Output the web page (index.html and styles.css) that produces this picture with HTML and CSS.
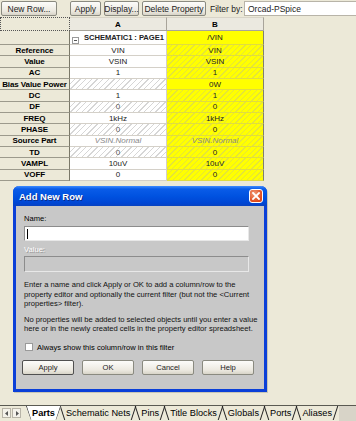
FILE: index.html
```html
<!DOCTYPE html>
<html>
<head>
<meta charset="utf-8">
<link rel="stylesheet" href="styles.css">
</head>
<body>
<div class="app">
  <div class="toolbar">
    <button class="btn btn-new">New Row...</button>
    <button class="btn btn-apply">Apply</button>
    <button class="btn btn-display">Display...</button>
    <button class="btn btn-delete">Delete Property</button>
    <span class="filter-label">Filter by:</span>
    <div class="filter-input">Orcad-PSpice</div>
  </div>

  <div class="sheet">
    <div class="grid">
      <div class="corner"></div>
      <div class="colhead">A</div>
      <div class="colhead">B</div>

      <div class="rowhead group-head"></div>
      <div class="cell a group"><span class="minus"></span><b>SCHEMATIC1 : PAGE1</b></div>
      <div class="cell b solid">/VIN</div>

      <div class="rowhead">Reference</div>
      <div class="cell a">VIN</div>
      <div class="cell b">VIN</div>

      <div class="rowhead">Value</div>
      <div class="cell a">VSIN</div>
      <div class="cell b">VSIN</div>

      <div class="rowhead">AC</div>
      <div class="cell a">1</div>
      <div class="cell b">1</div>

      <div class="rowhead">Bias Value Power</div>
      <div class="cell a hatch"></div>
      <div class="cell b solid">0W</div>

      <div class="rowhead">DC</div>
      <div class="cell a">1</div>
      <div class="cell b">1</div>

      <div class="rowhead">DF</div>
      <div class="cell a hatch">0</div>
      <div class="cell b">0</div>

      <div class="rowhead">FREQ</div>
      <div class="cell a">1kHz</div>
      <div class="cell b">1kHz</div>

      <div class="rowhead">PHASE</div>
      <div class="cell a hatch">0</div>
      <div class="cell b">0</div>

      <div class="rowhead">Source Part</div>
      <div class="cell a ital">VSIN.Normal</div>
      <div class="cell b ital">VSIN.Normal</div>

      <div class="rowhead">TD</div>
      <div class="cell a hatch">0</div>
      <div class="cell b">0</div>

      <div class="rowhead">VAMPL</div>
      <div class="cell a">10uV</div>
      <div class="cell b">10uV</div>

      <div class="rowhead">VOFF</div>
      <div class="cell a">0</div>
      <div class="cell b">0</div>
    </div>
  </div>

  <div class="tabbar">
    <span class="scroll"><svg width="4" height="5" viewBox="0 0 4 5"><path d="M3 0 L0 2.5 L3 5Z" fill="#555"/></svg></span>
    <span class="scroll"><svg width="4" height="5" viewBox="0 0 4 5"><path d="M1 0 L4 2.5 L1 5Z" fill="#555"/></svg></span>
    <div class="tabs">
      <span class="tab active">Parts</span>
      <span class="tab">Schematic Nets</span>
      <span class="tab">Pins</span>
      <span class="tab">Title Blocks</span>
      <span class="tab">Globals</span>
      <span class="tab">Ports</span>
      <span class="tab last">Aliases</span>
    </div>
    <div class="tab-rest"></div>
  </div>
</div>

<div class="dialog">
  <div class="titlebar">
    <span class="title">Add New Row</span>
    <span class="close"><svg width="8" height="8" viewBox="0 0 8 8"><path d="M1 1 L7 7 M7 1 L1 7" stroke="#fff" stroke-width="1.8" stroke-linecap="square"/></svg></span>
  </div>
  <div class="dbody">
    <div class="lbl">Name:</div>
    <div class="field"><span class="caret"></span></div>
    <div class="lbl disabled">Value:</div>
    <div class="field off"></div>
    <p class="para">Enter a name and click Apply or OK to add a column/row to the<br>property editor and optionally the current filter (but not the &lt;Current<br>properties&gt; filter).</p>
    <p class="para">No properties will be added to selected objects until you enter a value<br>here or in the newly created cells in the property editor spreadsheet.</p>
    <div class="check"><span class="box"></span><span>Always show this column/row in this filter</span></div>
    <div class="dbuttons">
      <button class="btn dbtn">Apply</button>
      <button class="btn dbtn">OK</button>
      <button class="btn dbtn">Cancel</button>
      <button class="btn dbtn">Help</button>
    </div>
  </div>
</div>
</body>
</html>
```

FILE: styles.css
```css
* { box-sizing: border-box; }
html, body { margin: 0; padding: 0; }
body {
  width: 356px;
  height: 421px;
  overflow: hidden;
  background: #ece9d8;
  font-family: "Liberation Sans", Arial, sans-serif;
  color: #000;
  position: relative;
}
.app {
  display: flex;
  flex-direction: column;
  height: 421px;
}

/* toolbar */
.toolbar {
  height: 17px;
  display: flex;
  align-items: center;
  padding: 0 0 0 1px;
}
.btn {
  font-family: "Liberation Sans", Arial, sans-serif;
  font-size: 8.5px;
  color: #222;
  height: 15px;
  padding: 0;
  border: 1px solid #8a8a80;
  border-radius: 2px;
  background: linear-gradient(#fcfcfa, #ece9e0 70%, #d8d4c8);
  display: inline-flex;
  align-items: center;
  justify-content: center;
}
.btn-new { width: 56px; margin-right: 13px; }
.btn-apply { width: 31px; margin-right: 3px; }
.btn-display { width: 35px; margin-right: 3px; }
.btn-delete { width: 64px; margin-right: 4px; }
.filter-label { font-size: 8.5px; width: 34px; color: #222; }
.filter-input {
  flex: 1;
  height: 15px;
  background: #fff;
  border: 1px solid #b8b4a8;
  border-right: none;
  font-size: 8.5px;
  padding-left: 3px;
  display: flex;
  align-items: center;
  color: #222;
}

/* sheet */
.sheet { flex: 1; }
.grid {
  display: grid;
  grid-template-columns: 70px 97px 97px;
  grid-template-rows: 14px 14px repeat(12, 11.33px);
  width: 264px;
  font-size: 8px;
}
.grid > div {
  display: flex;
  align-items: center;
  justify-content: center;
  white-space: nowrap;
  overflow: hidden;
}
.corner {
  border: 1px dotted #555;
  background: #ece9d8;
}
.colhead {
  background: #ebe9e0;
  font-weight: bold;
  border-right: 1px solid #a8a49a;
  border-bottom: 1px solid #a8a49a;
  border-top: 1px solid #d8d4c8;
}
.rowhead {
  background: #ece9d8;
  font-weight: bold;
  border-right: 1px solid #7a7868;
  border-bottom: 1px solid #9c9a8c;
  letter-spacing: -0.1px;
}
.cell {
  border-right: 1px solid #d4d0c8;
  border-bottom: 1px solid #d4d0c8;
  color: #222;
}
.cell.a { background: #fff; }
.cell.b {
  background: repeating-linear-gradient(135deg, #ffff00 0 3px, #e4e43a 3px 4px);
  border-right: 1px solid #808070;
  border-bottom-color: #e0dc40;
}
.cell.b.solid { background: #ffff00; }
.cell.a.hatch {
  background: repeating-linear-gradient(135deg, #ffffff 0 3px, #d6d6d6 3px 4px);
  color: #555;
}
.cell.ital { font-style: italic; color: #888; }
.grid > .cell.a.group {
  justify-content: flex-start;
  align-items: flex-start;
  padding-left: 2px;
  padding-top: 2px;
}
.group b { margin-left: 5px; font-size: 7.6px; letter-spacing: -0.05px; }
.minus {
  width: 7px;
  height: 7px;
  border: 1px solid #9a9a9a;
  position: relative;
  margin-top: 4px;
  background: #fff;
  flex: none;
}
.minus::after {
  content: "";
  position: absolute;
  left: 1px;
  right: 1px;
  top: 2px;
  height: 1px;
  background: #555;
}

/* tabs */
.tabbar {
  height: 16px;
  display: flex;
  align-items: stretch;
  border-top: 1px solid #5a5a52;
  background: #ece9d8;
  padding-left: 2px;
}
.scroll {
  width: 9px;
  height: 10px;
  margin-top: 2px;
  margin-right: 1px;
  border: 1px solid #b8b4a8;
  background: #f4f2ea;
  display: flex;
  align-items: center;
  justify-content: center;
}
.tabs {
  display: flex;
  margin-left: 4px;
  font-size: 9.2px;
}
.tab {
  position: relative;
  padding: 0 6px;
  margin-right: -1px;
  display: flex;
  align-items: center;
  height: 14px;
}
.tab::before, .tab::after {
  content: "";
  position: absolute;
  top: 0;
  height: 14px;
  width: 0;
}
.tab::before {
  left: 2px;
  border-left: 1px solid #222;
  transform: skewX(18deg);
}
.tab::after {
  right: 2px;
  border-right: 1px solid #222;
  transform: skewX(-18deg);
}
.tab.active {
  font-weight: bold;
  background: #fff;
  clip-path: polygon(0 0, 100% 0, calc(100% - 5px) 100%, 5px 100%);
  z-index: 1;
}
.tab-rest {
  flex: 1;
  background: #d8d4c8;
  margin-left: 2px;
}

/* dialog */
.dialog {
  position: absolute;
  left: 13px;
  top: 186px;
  width: 254px;
  height: 206px;
  background: #c8c8c8;
  border: 3px solid #0a3fd8;
  border-top: none;
  border-radius: 6px 6px 0 0;
  display: flex;
  flex-direction: column;
  box-shadow: 1px 1px 0 rgba(0,0,0,0.15);
}
.titlebar {
  height: 20px;
  margin: 0 -3px;
  border-radius: 6px 6px 0 0;
  background: linear-gradient(#3d8bff 0, #0a5ce8 3px, #0052e0 50%, #0046d4 85%, #0842c0 100%);
  display: flex;
  align-items: center;
  justify-content: space-between;
  padding: 0 4px 0 6px;
}
.title {
  color: #fff;
  font-weight: bold;
  font-size: 9.5px;
  text-shadow: 1px 1px 0 #0a2a8a;
}
.close {
  width: 14px;
  height: 14px;
  border: 1px solid #fff;
  border-radius: 3px;
  background: radial-gradient(circle at 35% 30%, #f09a78, #e04a1c 70%);
  display: flex;
  align-items: center;
  justify-content: center;
}
.dbody {
  flex: 1;
  padding: 8px 0 0 8px;
  font-size: 7.6px;
}
.lbl { height: 10px; line-height: 10px; }
.lbl.disabled {
  color: #fff;
  text-shadow: 1px 1px 0 #9a9a9a;
  margin-top: 4px;
}
.field {
  width: 225px;
  height: 15px;
  margin-top: 2px;
  background: #fff;
  border: 1px solid #8c8c8c;
  border-right-color: #e8e8e8;
  border-bottom-color: #e8e8e8;
  display: flex;
  align-items: center;
  padding-left: 2px;
}
.field.off {
  background: #c8c8c8;
  height: 16px;
  margin-top: 1px;
}
.caret {
  width: 1px;
  height: 10px;
  background: #000;
}
.para {
  margin: 0;
  line-height: 9.6px;
  color: #111;
}
.para:first-of-type { margin-top: 8px; }
.para + .para { margin-top: 6px; }
.check {
  display: flex;
  align-items: center;
  gap: 4px;
  margin-top: 9px;
  padding-left: 1px;
}
.box {
  width: 8px;
  height: 8px;
  background: #fff;
  border: 1px solid #9a9a9a;
}
.dbuttons {
  display: flex;
  gap: 8px;
  margin-top: 8px;
  margin-left: -2px;
}
.dbtn {
  width: 52px;
  height: 15px;
  font-size: 7.6px;
}
.dbtn:first-child { border-color: #505050; }
```
